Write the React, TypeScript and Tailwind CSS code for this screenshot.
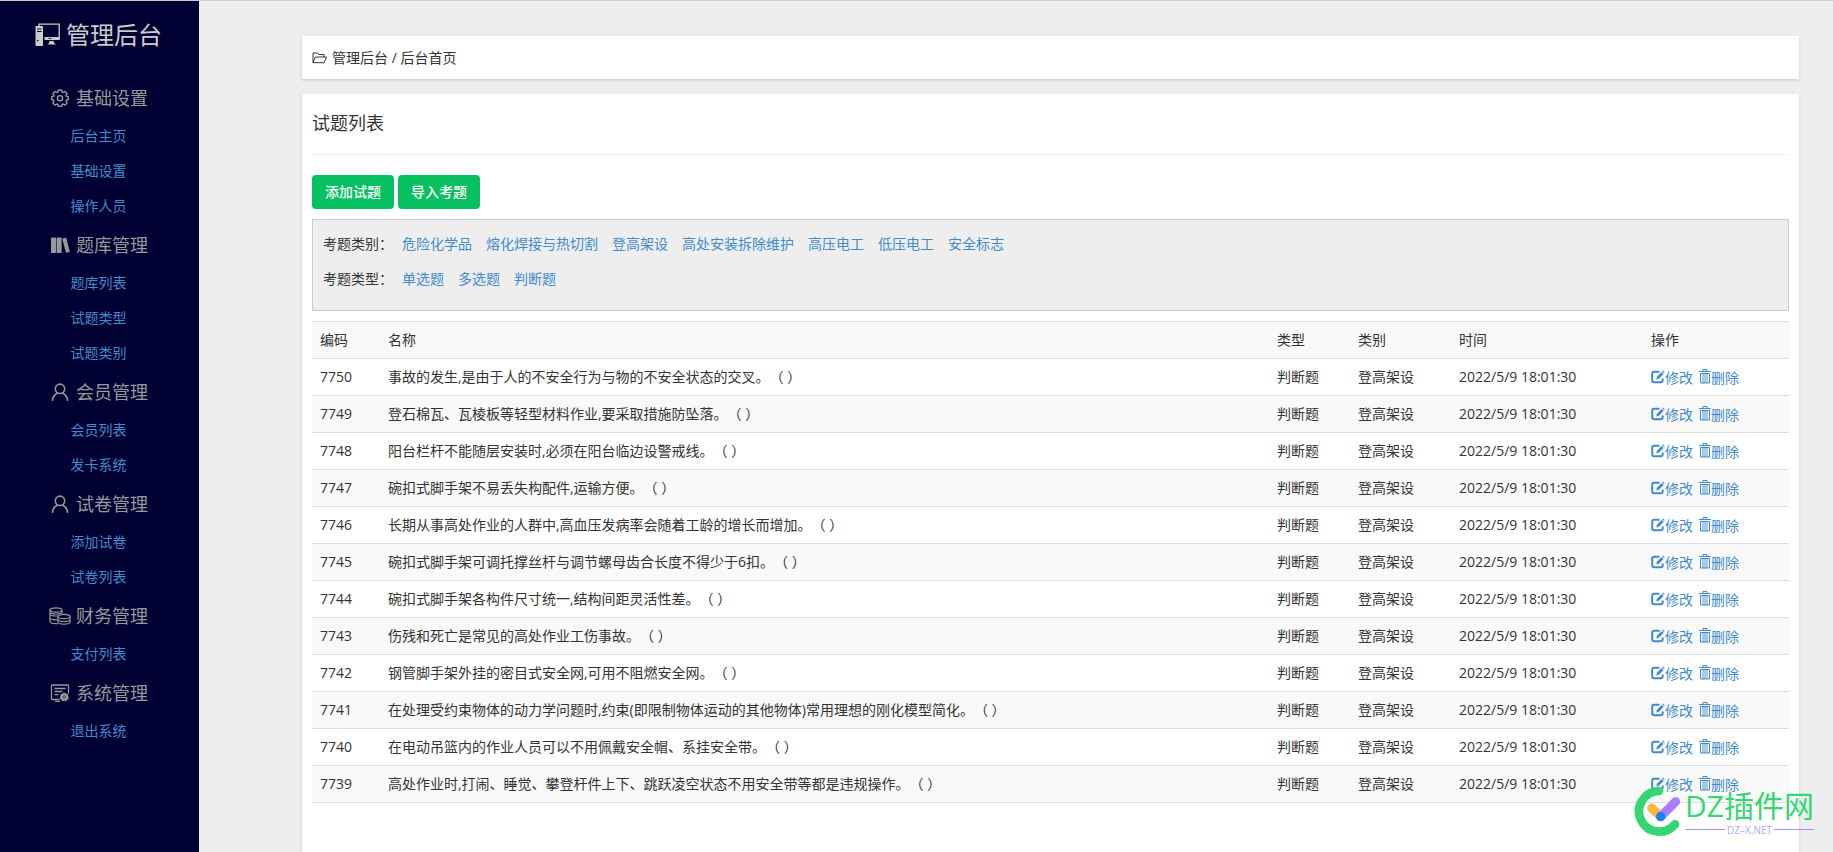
import type { ReactNode } from "react";

type MenuGroup = {
  title: string;
  icon: ReactNode;
  links: string[];
};

type Question = {
  id: number;
  name: string;
};

const ComputerIcon = () => (
  <svg className="h-6 w-[25px] shrink-0" viewBox="0 0 25 24" fill="none">
    <rect x="0.500" y="3" width="7.500" height="20" rx="0.800" fill="#ccc" />
    <path d="M2 6h4.500M2 8.500h4.500" stroke="#003" strokeWidth="1" />
    <circle cx="2.8" cy="17.5" r="0.8" fill="#003" />
    <path d="M4 3V1.200h20.200v15.300" stroke="#ccc" strokeWidth="1.3" />
    <path d="M9.500 14h15v3h-15z" fill="#ccc" />
    <path d="M13.5 15.5h3" stroke="#003" strokeWidth="0.8" />
    <path d="M14.500 18h4l.6 2 2 1.600h-9l2-1.600z" fill="#ccc" />
  </svg>
);

const GearIcon = () => (
  <svg className="size-[18px]" viewBox="0 0 18 18" fill="none" stroke="currentColor" strokeWidth="1.4">
    <path
      strokeLinejoin="round"
      d="M7.4 1h3.2l.5 2.1 1 .4 1.9-1.1 2.1 2.1-1.1 1.9.4 1 2 .5v2.6l-2 .6-.4 1 1.1 1.9-2.1 2.1-1.9-1.1-1 .4-.5 2.1H7.4l-.5-2.1-1-.4L4 16.100l-2.100-2.100L3 12.100l-.4-1-2-.6V7.900l2-.5.4-1-1.100-1.900L4 2.400l1.900 1.100 1-.4z"
    />
    <circle cx="9" cy="9.200" r="2.600" />
  </svg>
);

const BooksIcon = () => (
  <svg className="h-[18px] w-5" viewBox="0 0 20 18" fill="currentColor">
    <rect x="1" y="1.500" width="5" height="15.500" rx="0.8" />
    <rect x="6.600" y="1.500" width="5" height="15.500" rx="0.8" />
    <path d="M12.200 2.700l3.200-1c.5-.1.8.1.9.500l3.400 13c.1.500-.1.800-.5.900l-2.400.700c-.5.100-.8-.1-.9-.5z" />
  </svg>
);

const UserIcon = () => (
  <svg className="size-[18px]" viewBox="0 0 18 18" fill="none" stroke="currentColor" strokeWidth="1.6">
    <circle cx="9" cy="5.800" r="4.700" />
    <path d="M1.300 17.800c.4-3.600 2.400-6.400 5.200-7.700M16.700 17.800c-.4-3.600-2.400-6.400-5.200-7.700" />
  </svg>
);

const CoinsIcon = () => (
  <svg className="h-[18px] w-[22px]" viewBox="0 0 22 18" fill="none" stroke="currentColor" strokeWidth="1.200">
    <ellipse cx="7" cy="3" rx="6" ry="2.200" />
    <path d="M1 3v11.500c0 1.200 2.700 2.200 6 2.200h1.500M13 3v3.500M1 6.800C1 8 3.700 9 7 9h2M1 10.600c0 1.200 2.700 2.200 6 2.200h1.500M1 4.800C1 6 3.700 7 7 7s6-1 6-2.200" />
    <ellipse cx="15" cy="9.500" rx="6" ry="2.200" />
    <path d="M9 9.500v5.500c0 1.200 2.700 2.200 6 2.200s6-1 6-2.200V9.500M9 12.300c0 1.200 2.700 2.200 6 2.200s6-1 6-2.200" />
  </svg>
);

const SystemIcon = () => (
  <svg className="h-[18px] w-5" viewBox="0 0 20 18" fill="none" stroke="currentColor" strokeWidth="1.300">
    <path d="M9.500 15.500H2.200c-.4 0-.7-.3-.7-.7V1.700c0-.4.3-.7.700-.7h15.600c.4 0 .7.300.7.700v8M4.500 4.500h11M4.500 7.500h8M4.500 10.700h4" />
    <path d="M5 17.300h5" />
    <path
      fill="currentColor"
      stroke="none"
      d="M13.200 8.700h2.200l.4 1.200 1.200-.3 1.300 1.600-.6 1.100 1.100.7-.3 2.100-1.200.3-.1 1.200-2 .7-.9-.9-.9.900-2-.7-.1-1.200-1.200-.3-.3-2.100 1.100-.7-.6-1.100 1.300-1.600 1.200.3z"
    />
    <circle cx="14.300" cy="13" r="1.300" stroke="#003" strokeWidth="0.500" />
  </svg>
);

const FolderIcon = () => (
  <svg className="h-3 w-[15px]" viewBox="0 0 15 12" fill="none" stroke="currentColor" strokeLinejoin="round">
    <path d="M1 10.500V1h4.500l1.200 1.500H12V5M1 10.500L3.500 5h11L12 10.700H1z" />
  </svg>
);

const EditIcon = () => (
  <svg className="mb-[3px] size-[14px]" viewBox="0 0 14 14" fill="none" stroke="currentColor">
    <path d="M8.500 1.800H3.200C2.100 1.800 1.200 2.700 1.200 3.800v6.500c0 1.100.9 2 2 2h6.500c1.100 0 2-.9 2-2V8.500" strokeWidth="2" />
    <path d="M5.300 9.400l.6-2.700 4.700-4.800 2 2-4.800 4.800z" fill="currentColor" stroke="none" />
    <path d="M11.300 1.300l.8-.8 1.600 1.600-.8.800z" fill="currentColor" stroke="none" />
  </svg>
);

const TrashIcon = () => (
  <svg className="mb-[3px] h-[15px] w-3" viewBox="0 0 12 15" fill="none" stroke="currentColor">
    <path d="M0 2.500h12" />
    <path d="M4 2.500v-2h4v2M1.500 4.500h9v9.500h-9z" />
    <path d="M4 5v9M6 5v9M8 5v9" strokeWidth="0.900" />
  </svg>
);

const menu: MenuGroup[] = [
  { title: "基础设置", icon: <GearIcon />, links: ["后台主页", "基础设置", "操作人员"] },
  { title: "题库管理", icon: <BooksIcon />, links: ["题库列表", "试题类型", "试题类别"] },
  { title: "会员管理", icon: <UserIcon />, links: ["会员列表", "发卡系统"] },
  { title: "试卷管理", icon: <UserIcon />, links: ["添加试卷", "试卷列表"] },
  { title: "财务管理", icon: <CoinsIcon />, links: ["支付列表"] },
  { title: "系统管理", icon: <SystemIcon />, links: ["退出系统"] },
];

const filters = [
  {
    label: "考题类别：",
    options: ["危险化学品", "熔化焊接与热切割", "登高架设", "高处安装拆除维护", "高压电工", "低压电工", "安全标志"],
  },
  { label: "考题类型：", options: ["单选题", "多选题", "判断题"] },
];

const questions: Question[] = [
  { id: 7750, name: "事故的发生,是由于人的不安全行为与物的不安全状态的交叉。（ ）" },
  { id: 7749, name: "登石棉瓦、瓦棱板等轻型材料作业,要采取措施防坠落。（ ）" },
  { id: 7748, name: "阳台栏杆不能随层安装时,必须在阳台临边设警戒线。（ ）" },
  { id: 7747, name: "碗扣式脚手架不易丢失构配件,运输方便。（ ）" },
  { id: 7746, name: "长期从事高处作业的人群中,高血压发病率会随着工龄的增长而增加。（ ）" },
  { id: 7745, name: "碗扣式脚手架可调托撑丝杆与调节螺母齿合长度不得少于6扣。（ ）" },
  { id: 7744, name: "碗扣式脚手架各构件尺寸统一,结构间距灵活性差。（ ）" },
  { id: 7743, name: "伤残和死亡是常见的高处作业工伤事故。（ ）" },
  { id: 7742, name: "钢管脚手架外挂的密目式安全网,可用不阻燃安全网。（ ）" },
  { id: 7741, name: "在处理受约束物体的动力学问题时,约束(即限制物体运动的其他物体)常用理想的刚化模型简化。（ ）" },
  { id: 7740, name: "在电动吊篮内的作业人员可以不用佩戴安全帽、系挂安全带。（ ）" },
  { id: 7739, name: "高处作业时,打闹、睡觉、攀登杆件上下、跳跃凌空状态不用安全带等都是违规操作。（ ）" },
];

const Sidebar = () => (
  <aside className="w-[199px] shrink-0 bg-[#000033] pt-[10px] pr-0.5">
    <h1 className="mb-[18px] flex h-12 items-center justify-center gap-[6px] text-2xl text-[#ccc]">
      <ComputerIcon />
      管理后台
    </h1>
    <nav>
      {menu.map((group) => (
        <section key={group.title} className="pb-px">
          <h2 className="flex h-[41px] items-center justify-center text-lg text-[#999]">
            <span className="mr-[5px] flex w-[22px] justify-center">{group.icon}</span>
            {group.title}
          </h2>
          <ul>
            {group.links.map((link) => (
              <li key={link} className="text-center leading-[35px]">
                <a href="#" className="text-[#428bca]">
                  {link}
                </a>
              </li>
            ))}
          </ul>
        </section>
      ))}
    </nav>
  </aside>
);

const Filters = () => (
  <div className="mt-[10px] border border-[#ccc] bg-[#eee] px-[10px] pt-[6px] pb-[14px]">
    {filters.map((filter) => (
      <div key={filter.label} className="flex leading-[35px]">
        <span className="mr-[9px]">{filter.label}</span>
        <div className="flex flex-wrap gap-x-[14px]">
          {filter.options.map((option) => (
            <a key={option} href="#" className="text-[#428bca]">
              {option}
            </a>
          ))}
        </div>
      </div>
    ))}
  </div>
);

const QuestionTable = () => (
  <table className="mt-[10px] w-full table-fixed border-b border-[#ddd] text-left leading-5">
    <thead>
      <tr className="border-t border-[#ddd] bg-[#f9f9f9]">
        <th className="w-[68px] p-2 font-normal">编码</th>
        <th className="p-2 font-normal">名称</th>
        <th className="w-[81px] p-2 font-normal">类型</th>
        <th className="w-[101px] p-2 font-normal">类别</th>
        <th className="w-[192px] p-2 font-normal">时间</th>
        <th className="w-[146px] p-2 font-normal">操作</th>
      </tr>
    </thead>
    <tbody>
      {questions.map((question) => (
        <tr key={question.id} className="h-[37px] border-t border-[#ddd] even:bg-[#f9f9f9]">
          <td className="px-2">{question.id}</td>
          <td className="px-2 [text-spacing-trim:space-all]">{question.name}</td>
          <td className="px-2">判断题</td>
          <td className="px-2">登高架设</td>
          <td className="px-2">2022/5/9 18:01:30</td>
          <td className="px-2 pt-0.5">
            <div className="flex gap-[6px] text-[#428bca]">
              <a href="#" className="flex items-center">
                <EditIcon />
                修改
              </a>
              <a href="#" className="flex items-center">
                <TrashIcon />
                删除
              </a>
            </div>
          </td>
        </tr>
      ))}
    </tbody>
  </table>
);

const SiteMark = () => (
  <div className="absolute right-[19px] bottom-[15px] flex items-center gap-1">
    <svg className="h-[51px] w-12" viewBox="0 0 144 153" fill="none" strokeLinecap="round">
      <path d="M78 15A61 61 0 1 0 126 115" stroke="#35d672" strokeWidth="26" />
      <path d="M56 66l26 25" stroke="#ffb53e" strokeWidth="27" />
      <path d="M84 91l44-44" stroke="#a57fff" strokeWidth="27" />
      <circle cx="83" cy="92" r="14" fill="#1b82fb" />
    </svg>
    <div>
      <div className="text-3xl leading-9 text-[#35d672]">DZ插件网</div>
      <div className="flex items-center gap-[2px] text-[10px] leading-3 text-[#b9a4ff]">
        <span className="h-px flex-1 bg-[#a98fff]" />
        DZ–X.NET
        <span className="h-px flex-1 bg-[#a98fff]" />
      </div>
    </div>
  </div>
);

export default function App() {
  return (
    <div className="relative flex min-h-screen border-t border-[#ccc] bg-[#eee] font-['Open_Sans','Noto_Sans_CJK_SC',sans-serif] text-sm text-[#333]">
      <Sidebar />
      <main className="ml-[103px] mr-[34px] flex min-w-0 flex-1 flex-col pt-[35px]">
        <div className="flex h-[43px] items-center gap-[5px] bg-white px-[10px] shadow-[0_1px_3px_rgba(0,0,0,0.15)]">
          <FolderIcon />
          <span>管理后台 / 后台首页</span>
        </div>
        <div className="mt-[15px] flex-1 bg-white px-[10px] shadow-[0_1px_3px_rgba(0,0,0,0.15)]">
          <h2 className="border-b border-[#eee] pt-[15px] pb-[17px] text-lg leading-7">试题列表</h2>
          <div className="mt-5 flex gap-1">
            <button type="button" className="h-[34px] rounded bg-[#07c160] px-[13px] font-medium text-white">
              添加试题
            </button>
            <button type="button" className="h-[34px] rounded bg-[#07c160] px-[13px] font-medium text-white">
              导入考题
            </button>
          </div>
          <Filters />
          <QuestionTable />
        </div>
      </main>
      <SiteMark />
    </div>
  );
}
